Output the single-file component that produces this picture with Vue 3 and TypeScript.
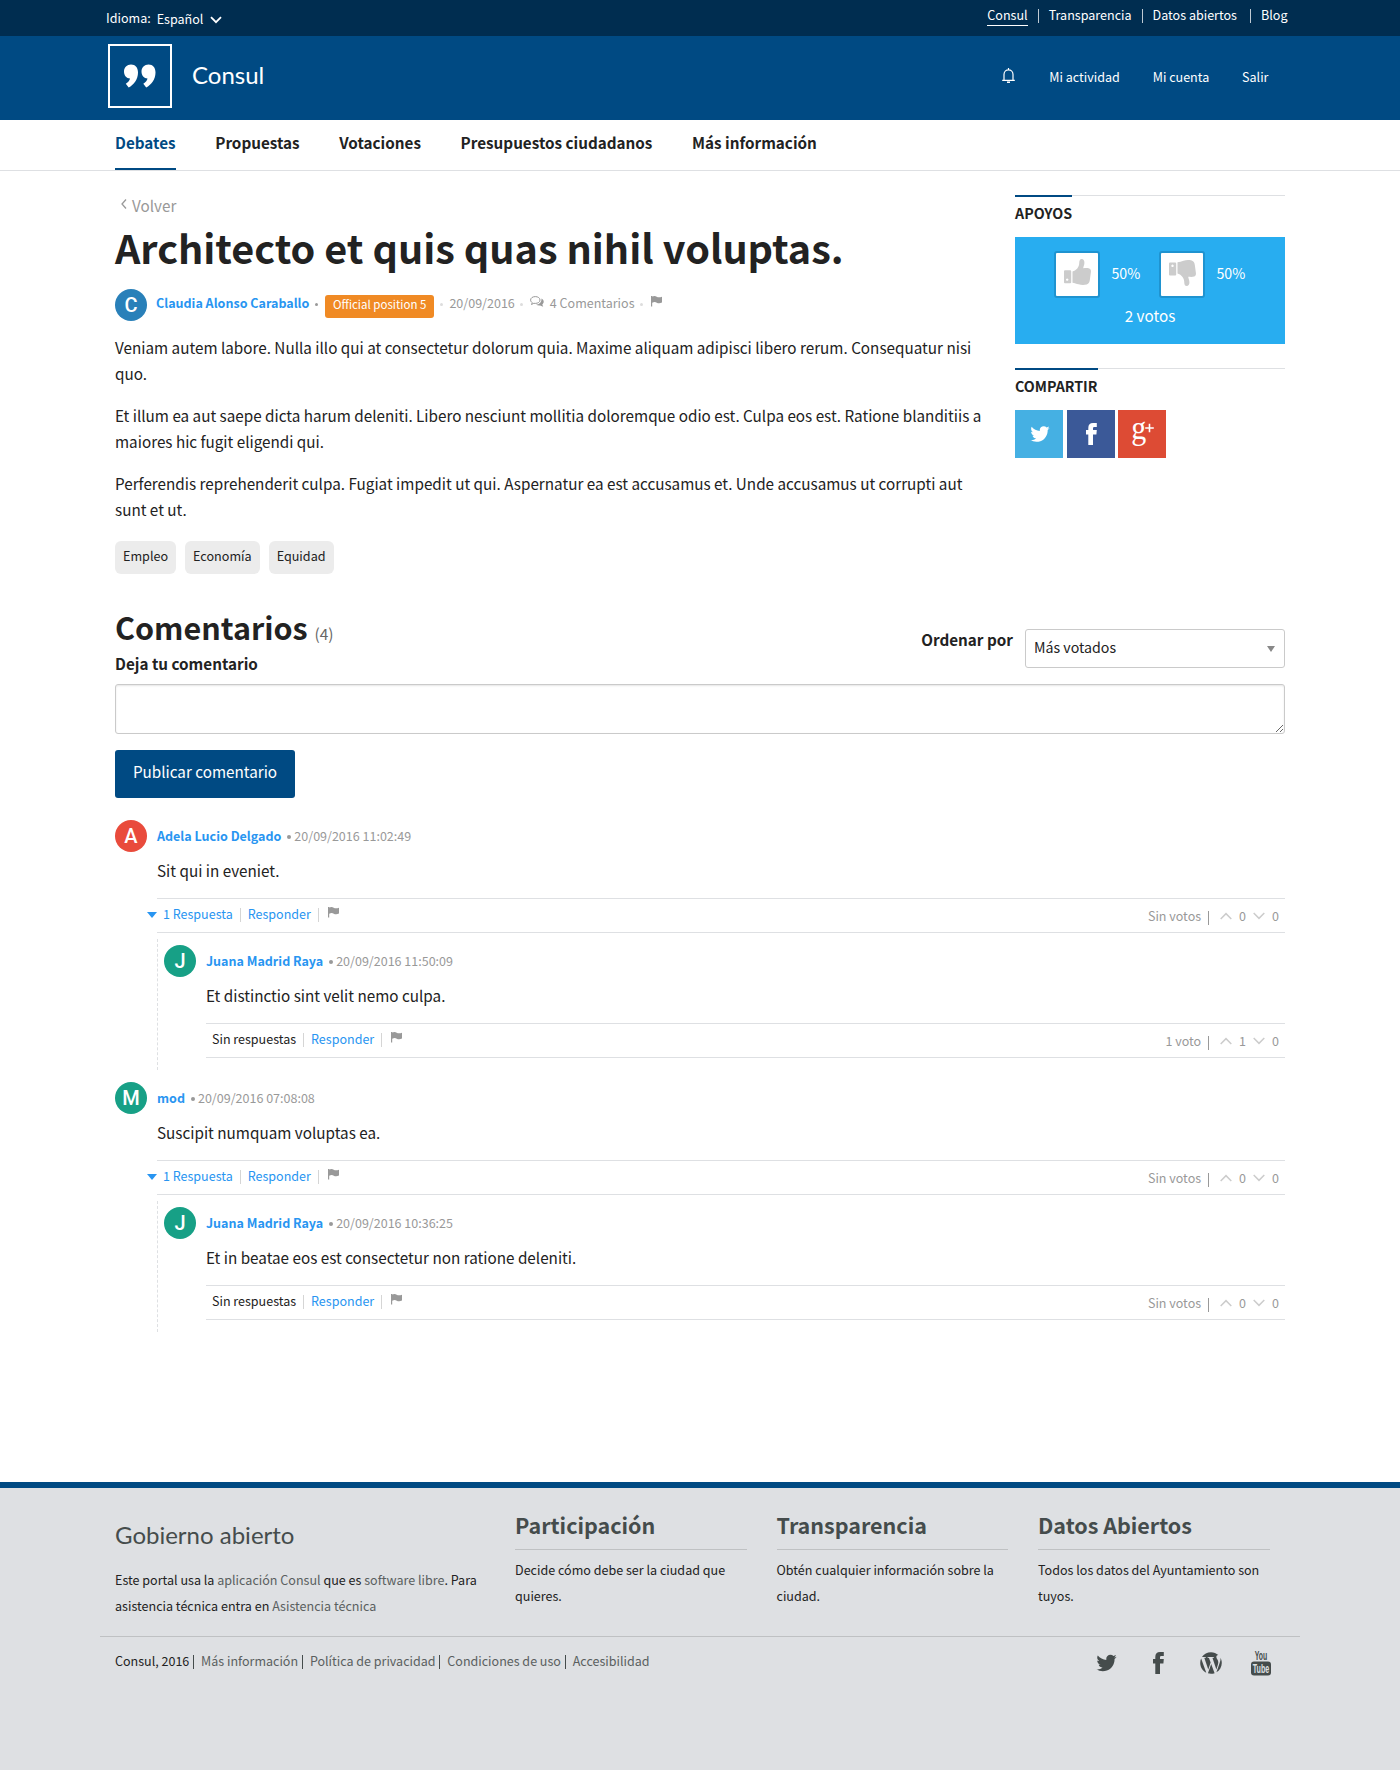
<script setup lang="ts">
interface Comment {
  initial: string
  color: string
  author: string
  date: string
  text: string
  votes: string
  up: number
  down: number
  replies: Comment[]
}

const topLinks: string[] = ['Consul', 'Transparencia', 'Datos abiertos', 'Blog']
const sections: string[] = ['Debates', 'Propuestas', 'Votaciones', 'Presupuestos ciudadanos', 'Más información']
const paragraphs: string[] = [
  'Veniam autem labore. Nulla illo qui at consectetur dolorum quia. Maxime aliquam adipisci libero rerum. Consequatur nisi quo.',
  'Et illum ea aut saepe dicta harum deleniti. Libero nesciunt mollitia doloremque odio est. Culpa eos est. Ratione blanditiis a maiores hic fugit eligendi qui.',
  'Perferendis reprehenderit culpa. Fugiat impedit ut qui. Aspernatur ea est accusamus et. Unde accusamus ut corrupti aut sunt et ut.',
]
const tags: string[] = ['Empleo', 'Economía', 'Equidad']
const comments: Comment[] = [
  {
    initial: 'A', color: '#e94b3c', author: 'Adela Lucio Delgado', date: '20/09/2016 11:02:49',
    text: 'Sit qui in eveniet.', votes: 'Sin votos', up: 0, down: 0,
    replies: [{
      initial: 'J', color: '#17a086', author: 'Juana Madrid Raya', date: '20/09/2016 11:50:09',
      text: 'Et distinctio sint velit nemo culpa.', votes: '1 voto', up: 1, down: 0, replies: [],
    }],
  },
  {
    initial: 'M', color: '#17a086', author: 'mod', date: '20/09/2016 07:08:08',
    text: 'Suscipit numquam voluptas ea.', votes: 'Sin votos', up: 0, down: 0,
    replies: [{
      initial: 'J', color: '#17a086', author: 'Juana Madrid Raya', date: '20/09/2016 10:36:25',
      text: 'Et in beatae eos est consectetur non ratione deleniti.', votes: 'Sin votos', up: 0, down: 0, replies: [],
    }],
  },
]
const footerColumns = [
  { title: 'Participación', text: 'Decide cómo debe ser la ciudad que quieres.' },
  { title: 'Transparencia', text: 'Obtén cualquier información sobre la ciudad.' },
  { title: 'Datos Abiertos', text: 'Todos los datos del Ayuntamiento son tuyos.' },
]
const legalLinks: string[] = ['Más información', 'Política de privacidad', 'Condiciones de uso', 'Accesibilidad']

const flagPath = 'M0 0h1.2v.6C3 -.4 4.600 0 5.700 .7S8.600 1.600 11 .8V6.600C8.800 7.700 7.100 7.500 5.800 6.700S3 5.800 1.200 6.700V10.500H0z'
const birdPath = 'M1684 408q-67 98-162 167 1 14 1 42 0 130-38 259.5t-115.5 248.5-184.5 210.5-258 146-323 54.5q-271 0-496-145 35 4 78 4 225 0 401-138-105-2-188-64.5t-114-159.5q33 5 61 5 43 0 85-11-112-23-185.500-111.500t-73.500-205.500v-4q68 38 146 41-66-44-105-115t-39-154q0-88 44-163 121 149 294.500 238.500t371.500 99.500q-8-38-8-74 0-134 94.500-228.500t228.500-94.500q140 0 236 102 109-21 205-78-37 115-142 178 93-10 186-50z'
const fbPath = 'M2.300 22V11.400H0V7h2.300V4.900C2.300 1.700 4 0 7 0h3.800v4H8.500C7.300 4 7 4.500 7 5.500V7h3.800l-.4 4.400H7V22z'
const handPath = 'M8.500 12.500C12 11.500 15 8.500 15.200 4.500 15.200 1.500 16 0 17.600 0c2 0 3 1.800 2.800 4 -.1 2-1 3.500-1.200 5.200 2.300-.2 4.500-.3 6 .2 1.500.6 2 2 1.700 3.500l-1 7.600c-.2 2.500-1.200 4.300-3.200 4.900-2.500.7-5.500.6-8.200-.1-2-.5-4-1.400-6-1.600z'
const quotePath = 'M7 .5C11.500 .5 14 3.500 14 8.500c0 7-4.500 12.500-9.300 15L1.800 19.800c2.500-1.700 4-3.600 4.200-5.300C2.500 14.300 0 11.500 0 7.500 0 3.500 3 .5 7 .5z'
</script>

<template>
  <div class="page">
    <header>
      <div class="topbar">
        <div class="row topbar-row">
          <div class="locale">
            <span>Idioma:</span>
            <span class="lang">Español</span>
            <svg width="12" height="8" viewBox="0 0 12 8"><path d="M1 1.200l5 5 5-5" fill="none" stroke="#fff" stroke-width="1.800" /></svg>
          </div>
          <nav class="external">
            <template v-for="(l, i) in topLinks" :key="l">
              <i v-if="i > 0" class="bar"></i>
              <a :class="{ current: i === 0 }">{{ l }}</a>
            </template>
          </nav>
        </div>
      </div>
      <div class="brandbar">
        <div class="row brand-row">
          <div class="logo">
            <svg width="32" height="24" viewBox="0 0 32 24" fill="#fff">
              <path :d="quotePath" />
              <path transform="translate(17.500)" :d="quotePath" />
            </svg>
          </div>
          <span class="brand">Consul</span>
          <nav class="account">
            <svg class="bell" width="13" height="16" viewBox="0 0 13 16" fill="none" stroke="#fff" stroke-width="1.200">
              <path d="M.2 12.400h12.600M2 12.400V6.500C2 3.700 4 1.800 6.500 1.800S11 3.700 11 6.500v5.900M6.500 0v1.800" /><path d="M5 14.200h3" stroke-width="1.500" />
            </svg>
            <a>Mi actividad</a>
            <a>Mi cuenta</a>
            <a>Salir</a>
          </nav>
        </div>
      </div>
      <nav class="subnav">
        <div class="row subnav-row">
          <a v-for="(s, i) in sections" :key="s" :class="{ active: i === 0 }">{{ s }}</a>
        </div>
      </nav>
    </header>

    <main class="row main">
      <div class="debate">
        <article>
          <a class="back">
            <svg width="6" height="10" viewBox="0 0 6 10"><path d="M5 .500L1 5l4 4.500" fill="none" stroke="#999" stroke-width="1.300" /></svg>
            <span>Volver</span>
          </a>
          <h1>Architecto et quis quas nihil voluptas.</h1>
          <div class="info">
            <span class="avatar" style="background: #2980b9">C</span>
            <b class="author">Claudia Alonso Caraballo</b>
            <i class="dot dark"></i>
            <span class="badge">Official position 5</span>
            <i class="dot"></i>
            <span>20/09/2016</span>
            <i class="dot"></i>
            <svg class="talk" width="14" height="12" viewBox="0 0 14 12">
              <path d="M5.300.600C2.600.600.600 2 .600 4c0 1.200.700 2.100 1.700 2.700L1.500 8.500l2.300-1.200c.500.100 1 .100 1.500.100 2.700 0 4.700-1.400 4.700-3.400S8 .600 5.300.600z" fill="none" stroke="#999" stroke-width="1" />
              <path d="M11.500 2.500c1.500.800 2.400 2 2.200 3.600-.100 1-.700 1.800-1.400 2.400l.900 2.300-3.100-1.400c-1.600.200-3-.100-4.100-.900 3 0 5.700-1.700 5.500-6z" fill="#999" />
            </svg>
            <span>4 Comentarios</span>
            <i class="dot"></i>
            <svg class="flag" width="11" height="11" viewBox="0 0 11 11"><path :d="flagPath" fill="#999" /></svg>
          </div>
          <p v-for="p in paragraphs" :key="p">{{ p }}</p>
          <div class="tags"><span v-for="t in tags" :key="t">{{ t }}</span></div>
        </article>
        <aside>
          <section>
            <div class="side-title"><h2>Apoyos</h2></div>
            <div class="votes-box">
              <div class="ballots">
                <span class="thumb">
                  <svg width="27" height="26" viewBox="0 0 27 26" fill="#ccc">
                    <path fill-rule="evenodd" d="M1 11.200h5.200a1 1 0 0 1 1 1v11a1 1 0 0 1-1 1H1a1 1 0 0 1-1-1v-11a1 1 0 0 1 1-1zm2.200 8.200a1.200 1.200 0 1 0 .01 0z" />
                    <path :d="handPath" />
                  </svg>
                </span>
                <span class="pct">50%</span>
                <span class="thumb down">
                  <svg width="27" height="26" viewBox="0 0 27 26" fill="#ccc">
                    <path fill-rule="evenodd" d="M1 2.500h5.200a1 1 0 0 1 1 1v11a1 1 0 0 1-1 1H1a1 1 0 0 1-1-1v-11a1 1 0 0 1 1-1zm2.500 2.100a1.200 1.200 0 1 0 .01 0z" />
                    <path transform="matrix(1 0 0 -1 0 26)" :d="handPath" />
                  </svg>
                </span>
                <span class="pct">50%</span>
              </div>
              <div class="total">2 votos</div>
            </div>
          </section>
          <section>
            <div class="side-title"><h2>Compartir</h2></div>
            <div class="share">
              <a class="tw"><svg width="22" height="22" viewBox="0 0 1792 1792" fill="#fff"><path :d="birdPath" /></svg></a>
              <a class="fb"><svg width="11" height="22" viewBox="0 0 11 22" fill="#fff"><path :d="fbPath" /></svg></a>
              <a class="gp">
                <svg width="26" height="26" viewBox="0 0 26 26">
                  <text x="1.200" y="18.300" textLength="15" lengthAdjust="spacingAndGlyphs" class="gplus">g</text>
                  <path d="M19.500 2.700v8.600M15.200 7h8.600" stroke="#fff" stroke-width="1.600" />
                </svg>
              </a>
            </div>
          </section>
        </aside>
      </div>

      <section class="comments">
        <div class="comments-head">
          <h2>Comentarios <small>(4)</small></h2>
          <div class="order">
            <label>Ordenar por</label>
            <div class="select"><span>Más votados</span><i></i></div>
          </div>
        </div>
        <label class="leave">Deja tu comentario</label>
        <textarea></textarea>
        <button type="button">Publicar comentario</button>

        <div v-for="c in comments" :key="c.date" class="thread">
          <template v-for="(item, depth) in [c, ...c.replies]" :key="item.date">
            <div :class="depth === 0 ? 'comment' : 'comment reply'">
              <div class="comment-head">
                <span class="avatar" :style="{ background: item.color }">{{ item.initial }}</span>
                <b class="author">{{ item.author }}</b>
                <i class="dot dark"></i>
                <span class="when">{{ item.date }}</span>
              </div>
              <div class="comment-body">
                <p>{{ item.text }}</p>
                <div class="actions">
                  <div class="left">
                    <template v-if="item.replies.length">
                      <i class="caret"></i><a>{{ item.replies.length }} Respuesta</a>
                    </template>
                    <span v-else class="none">Sin respuestas</span>
                    <i class="sep"></i>
                    <a>Responder</a>
                    <i class="sep"></i>
                    <svg class="flag" width="11" height="11" viewBox="0 0 11 11"><path :d="flagPath" fill="#999" /></svg>
                  </div>
                  <div class="right">
                    <span>{{ item.votes }}</span>
                    <i class="sep"></i>
                    <svg width="12" height="8" viewBox="0 0 12 8"><path d="M.700 7L6 1.600 11.300 7" fill="none" stroke="#ccc" stroke-width="1.500" /></svg>
                    <span class="n">{{ item.up }}</span>
                    <svg width="12" height="8" viewBox="0 0 12 8"><path d="M.700 1L6 6.400 11.300 1" fill="none" stroke="#ccc" stroke-width="1.500" /></svg>
                    <span class="n">{{ item.down }}</span>
                  </div>
                </div>
              </div>
            </div>
          </template>
        </div>
      </section>
    </main>

    <footer>
      <div class="row foot-main">
        <div class="about">
          <div class="foot-brand">Gobierno abierto</div>
          <p>Este portal usa la <a>aplicación Consul</a> que es <a>software libre</a>. Para asistencia técnica entra en <a>Asistencia técnica</a></p>
        </div>
        <div v-for="col in footerColumns" :key="col.title" class="foot-col">
          <h3>{{ col.title }}</h3>
          <p>{{ col.text }}</p>
        </div>
      </div>
      <div class="row foot-legal">
        <div class="legal">
          <span>Consul, 2016</span>
          <template v-for="l in legalLinks" :key="l"><i class="fsep"></i><a>{{ l }}</a></template>
        </div>
        <div class="social">
          <svg width="23" height="24" viewBox="0 0 1792 1792" fill="#454c4c"><path :d="birdPath" /></svg>
          <svg class="foot-fb" width="11" height="22" viewBox="0 0 11 22" fill="#454c4c"><path :d="fbPath" /></svg>
          <svg width="24" height="24" viewBox="0 0 24 24" fill="#454c4c"><path d="M21.469 6.825c.84 1.537 1.318 3.300 1.318 5.175 0 3.979-2.156 7.456-5.363 9.325l3.295-9.527c.615-1.540.820-2.771.820-3.864 0-.405-.026-.780-.070-1.110m-7.981.105c.647-.030 1.232-.105 1.232-.105.582-.075.514-.930-.067-.899 0 0-1.755.135-2.880.135-1.064 0-2.850-.150-2.850-.150-.585-.030-.661.855-.075.885 0 0 .540.061 1.125.090l1.680 4.605-2.370 7.080L5.354 6.900c.649-.030 1.234-.100 1.234-.100.585-.075.516-.930-.065-.896 0 0-1.746.138-2.874.138-.200 0-.438-.008-.690-.015C4.911 3.150 8.235 1.215 12 1.215c2.809 0 5.365 1.072 7.286 2.833-.046-.003-.091-.009-.141-.009-1.060 0-1.812.923-1.812 1.914 0 .890.513 1.643 1.060 2.531.411.720.890 1.643.890 2.977 0 .915-.354 1.994-.821 3.479l-1.075 3.585-3.900-11.610.001.014zM12 22.784c-1.059 0-2.081-.153-3.048-.437l3.237-9.406 3.315 9.087c.024.053.050.101.078.149-1.120.393-2.325.609-3.582.609M1.211 12c0-1.564.336-3.050.935-4.390L7.290 21.709C3.694 19.960 1.212 16.271 1.211 12" /></svg>
          <svg width="20" height="25" viewBox="0 0 20 25">
            <text x="10" y="9" textLength="12.500" lengthAdjust="spacingAndGlyphs" text-anchor="middle" class="yt" fill="#454c4c">You</text>
            <rect x="0" y="10.500" width="20" height="14" rx="3" fill="#454c4c" />
            <text x="10" y="21.900" textLength="16.500" lengthAdjust="spacingAndGlyphs" text-anchor="middle" class="yt" fill="#dee0e3">Tube</text>
          </svg>
        </div>
      </div>
    </footer>
  </div>
</template>

<style>
body {
  margin: 0;
}
</style>

<style scoped>
.page {
  width: 1400px;
  min-height: 1770px;
  display: flex;
  flex-direction: column;
  background: #fff;
  color: #222;
  font-family: "Noto Sans CJK SC", "Noto Sans", sans-serif;
  font-size: 15.250px;
  line-height: 26px;
}
.page * {
  box-sizing: border-box;
}
svg {
  overflow: visible;
}
h1, h2, h3, p {
  margin: 0;
}
.row {
  width: 1200px;
  margin: 0 auto;
}
.topbar {
  height: 36px;
  background: #002d50;
  color: #fff;
  font-size: 12.550px;
}
.topbar-row {
  display: flex;
  justify-content: space-between;
  padding: 2px 12.500px 0 6px;
}
.locale {
  display: flex;
  align-items: center;
  height: 32px;
}
.lang {
  margin: 2px 7px 0 6px;
}
.locale svg {
  margin-top: 4px;
}
.external {
  display: flex;
  align-items: flex-start;
}
.external a {
  height: 24px;
}
.external .current {
  border-bottom: 1px solid #fff;
}
.bar {
  width: 1px;
  height: 14px;
  margin: 7px 10px 0;
  background: rgba(255, 255, 255, .75);
}
.bar:nth-last-child(2) {
  margin-left: 13px;
}
.brandbar {
  height: 84px;
  background: #004a83;
  color: #fff;
}
.brand-row {
  display: flex;
  align-items: center;
  height: 84px;
  padding: 0 31.500px 4px 8px;
}
.brand-row .logo {
  display: flex;
  align-items: center;
  justify-content: center;
  width: 64px;
  height: 64px;
  border: 2px solid #fff;
  padding-bottom: 1px;
}
.brand {
  margin-left: 20px;
  padding-bottom: 2px;
  font-family: Lato, sans-serif;
  font-size: 24px;
}
.account {
  display: flex;
  align-items: center;
  gap: 32.800px;
  margin-left: auto;
  padding-top: 2px;
  font-size: 12.550px;
}
.bell {
  margin: 0 2px 2px 0;
}
.subnav {
  height: 51px;
  border-bottom: 1px solid #dee0e3;
}
.subnav-row {
  display: flex;
  gap: 39.600px;
  padding: 0 15px;
}
.subnav a {
  height: 50px;
  line-height: 44px;
  font-weight: 700;
}
.subnav .active {
  color: #004a83;
  border-bottom: 2px solid #004a83;
}
.main {
  padding: 24px 15px 0;
}
.debate {
  display: flex;
  justify-content: space-between;
}
article {
  width: 870px;
}
.back {
  display: flex;
  align-items: center;
  gap: 5px;
  height: 21px;
  padding-left: 6px;
  color: #999;
}
.back svg {
  margin-bottom: 4px;
}
.back span {
  padding-bottom: 1px;
}
h1 {
  font-size: 39.600px;
  line-height: 62px;
}
.info {
  display: flex;
  align-items: center;
  height: 32px;
  margin: 11px 0 13px;
  font-size: 12.530px;
  color: #999;
}
.info > span:not(.avatar), .info > b {
  margin-top: -4px;
}
.avatar {
  width: 32px;
  height: 32px;
  border-radius: 50%;
  color: #fff;
  font: 500 20px/33px Roboto, sans-serif;
  text-align: center;
}
.author {
  margin-left: 9px;
  color: #2895f1;
}
.dot {
  width: 3px;
  height: 3px;
  margin: -2px 6.500px 0 5.500px;
  border-radius: 50%;
  background: #ddd;
}
.dot.dark {
  margin-left: 6px;
  background: #999;
}
.info > span.badge {
  height: 23px;
  margin-top: 2px;
  padding: 0 8px;
  border-radius: 3px;
  background: #f08a24;
  color: #fff;
  font-size: 11.500px;
  line-height: 18px;
}
.talk {
  margin: -6px 6px 0 0;
}
.info .flag {
  margin-top: -8px;
  margin-left: 1px;
}
article p {
  margin-bottom: 16px;
}
.tags {
  display: flex;
  gap: 9px;
  margin-top: 19px;
}
.tags span {
  height: 33px;
  padding: 0 8px;
  border-radius: 6px;
  background: #ececec;
  font-size: 12.600px;
  line-height: 30px;
}
aside {
  width: 270px;
}
.side-title {
  height: 42px;
  border-top: 1px solid #dee0e3;
}
.side-title h2 {
  display: inline-block;
  margin-top: -1px;
  border-top: 2px solid #004a83;
  font-size: 14.250px;
  line-height: 32px;
  text-transform: uppercase;
  vertical-align: top;
}
.votes-box {
  height: 107px;
  margin-bottom: 24px;
  padding-top: 14px;
  background: #28adf0;
  color: #fff;
  text-align: center;
}
.ballots {
  display: flex;
  align-items: center;
  padding-left: 39px;
}
.thumb {
  display: flex;
  align-items: center;
  justify-content: center;
  width: 46px;
  height: 47px;
  padding-bottom: 6px;
  border: 2px solid #1f93d0;
  border-radius: 3px;
  background: #fff;
}
.thumb.down {
  padding-bottom: 3px;
}
.pct {
  width: 59px;
  padding-left: 11.500px;
  margin-top: -3px;
  font-size: 14.200px;
  text-align: left;
}
.total {
  margin-top: 4px;
}
.share {
  display: flex;
  gap: 3.500px;
}
.share a {
  display: flex;
  align-items: center;
  justify-content: center;
  width: 48px;
  height: 48px;
  padding-left: 2px;
}
.tw {
  background: #45b0e3;
}
.fb {
  background: #3b5998;
}
.gp {
  background: #dd4b34;
}
.gplus {
  font: 33px "Liberation Serif", serif;
  fill: #fff;
}
.comments-head {
  display: flex;
  justify-content: space-between;
  height: 76px;
  padding-top: 33px;
}
.comments-head h2 {
  font-size: 30.500px;
  line-height: 40px;
}
.comments-head small {
  font-size: 15.500px;
  font-weight: 400;
  color: #666;
}
.order {
  display: flex;
  margin-top: 22px;
  gap: 12px;
  font-weight: 700;
}
.order label {
  line-height: 20px;
}
.select {
  display: flex;
  align-items: center;
  justify-content: space-between;
  width: 260px;
  height: 39px;
  padding: 0 9px 3px 8px;
  border: 1px solid #cacaca;
  border-radius: 3px;
  font-size: 14.200px;
  font-weight: 400;
}
.select i {
  margin-top: 3px;
  border: 4px solid transparent;
  border-top: 6px solid #888;
  border-bottom: 0;
}
.leave {
  display: block;
  font-weight: 700;
  height: 34px;
}
textarea {
  display: block;
  width: 1170px;
  height: 50px;
  border: 1px solid #cacaca;
  border-radius: 3px;
  box-shadow: inset 0 1px 2px rgba(10, 10, 10, .1);
  resize: vertical;
}
button {
  width: 180px;
  height: 48px;
  margin: 16px 0 22px;
  padding: 0 0 6px;
  border: 0;
  border-radius: 3px;
  background: #004a83;
  color: #fff;
  font: 15.250px/42px "Noto Sans CJK SC", sans-serif;
  display: block;
}
.thread {
  margin-bottom: 12px;
}
.comment-head {
  display: flex;
  height: 32px;
  font-size: 12.530px;
  line-height: 31px;
}
.comment-head .author {
  margin-left: 10px;
}
.comment-head .dot {
  width: 4px;
  height: 4px;
  margin: 15px 3px 0 6px;
}
.when {
  color: #999;
}
.comment-body {
  padding: 5px 0 0 42px;
}
.actions {
  display: flex;
  justify-content: space-between;
  height: 35px;
  margin-top: 15px;
  padding: 0 6px;
  border: 1px solid #dee0e3;
  border-width: 1px 0;
  font-size: 12.530px;
  line-height: 29px;
}
.left {
  display: flex;
  color: #2895f1;
}
.none {
  color: #222;
}
.caret {
  width: 0;
  height: 0;
  margin: 13px 6px 0 -16px;
  border: 5px solid transparent;
  border-top: 6px solid #2895f1;
  border-bottom: 0;
}
.sep {
  width: 1px;
  height: 14px;
  margin: 9px 7px 0;
  background: #d5d5d5;
}
.left .flag {
  margin: 8px 0 0 2px;
}
.right {
  display: flex;
  color: #999;
  line-height: 33px;
}
.right .sep {
  margin: 12px 11px 0 7px;
  background: #999;
}
.right svg {
  margin-top: 13px;
}
.right .n {
  margin: 0 7px;
}
.right .n:last-child {
  margin-right: 0;
}
.reply {
  margin: 6px 0 0 42px;
  padding: 6px 0 12px 6px;
  border-left: 1px dashed #dee0e3;
}
footer {
  flex: 1;
  margin-top: 138px;
  border-top: 6px solid #004a83;
  background: #dee0e3;
  font-size: 12.550px;
}
.foot-main {
  display: flex;
  height: 149px;
  padding: 20px 15px 0;
  border-bottom: 1px solid #bfc1c3;
}
.about {
  width: 370px;
  margin-right: 30px;
  padding-top: 14px;
}
.foot-brand {
  height: 45px;
  font-family: Lato, sans-serif;
  font-size: 24px;
  color: #454c4c;
}
footer a {
  color: #5a5f60;
}
.foot-col {
  width: 231.500px;
  margin-right: 30px;
}
.foot-col h3 {
  height: 42px;
  margin-bottom: 7px;
  border-bottom: 1px solid #bfc1c3;
  font-size: 21.500px;
  line-height: 34px;
  color: #454c4c;
}
.foot-col:last-child {
  margin-right: 0;
}
.foot-legal {
  display: flex;
  justify-content: space-between;
  padding: 11px 29px 0 15px;
}
.legal {
  display: flex;
  font-size: 12.530px;
}
.fsep {
  width: 1px;
  height: 14px;
  margin: 7px 7px 0 3.800px;
  background: #454c4c;
}
.social {
  display: flex;
  gap: 28.300px;
  padding-top: 3px;
}
.foot-fb {
  margin: 1px 6px 0 7px;
}
.yt {
  font: 700 12px "Liberation Sans", sans-serif;
}
</style>
